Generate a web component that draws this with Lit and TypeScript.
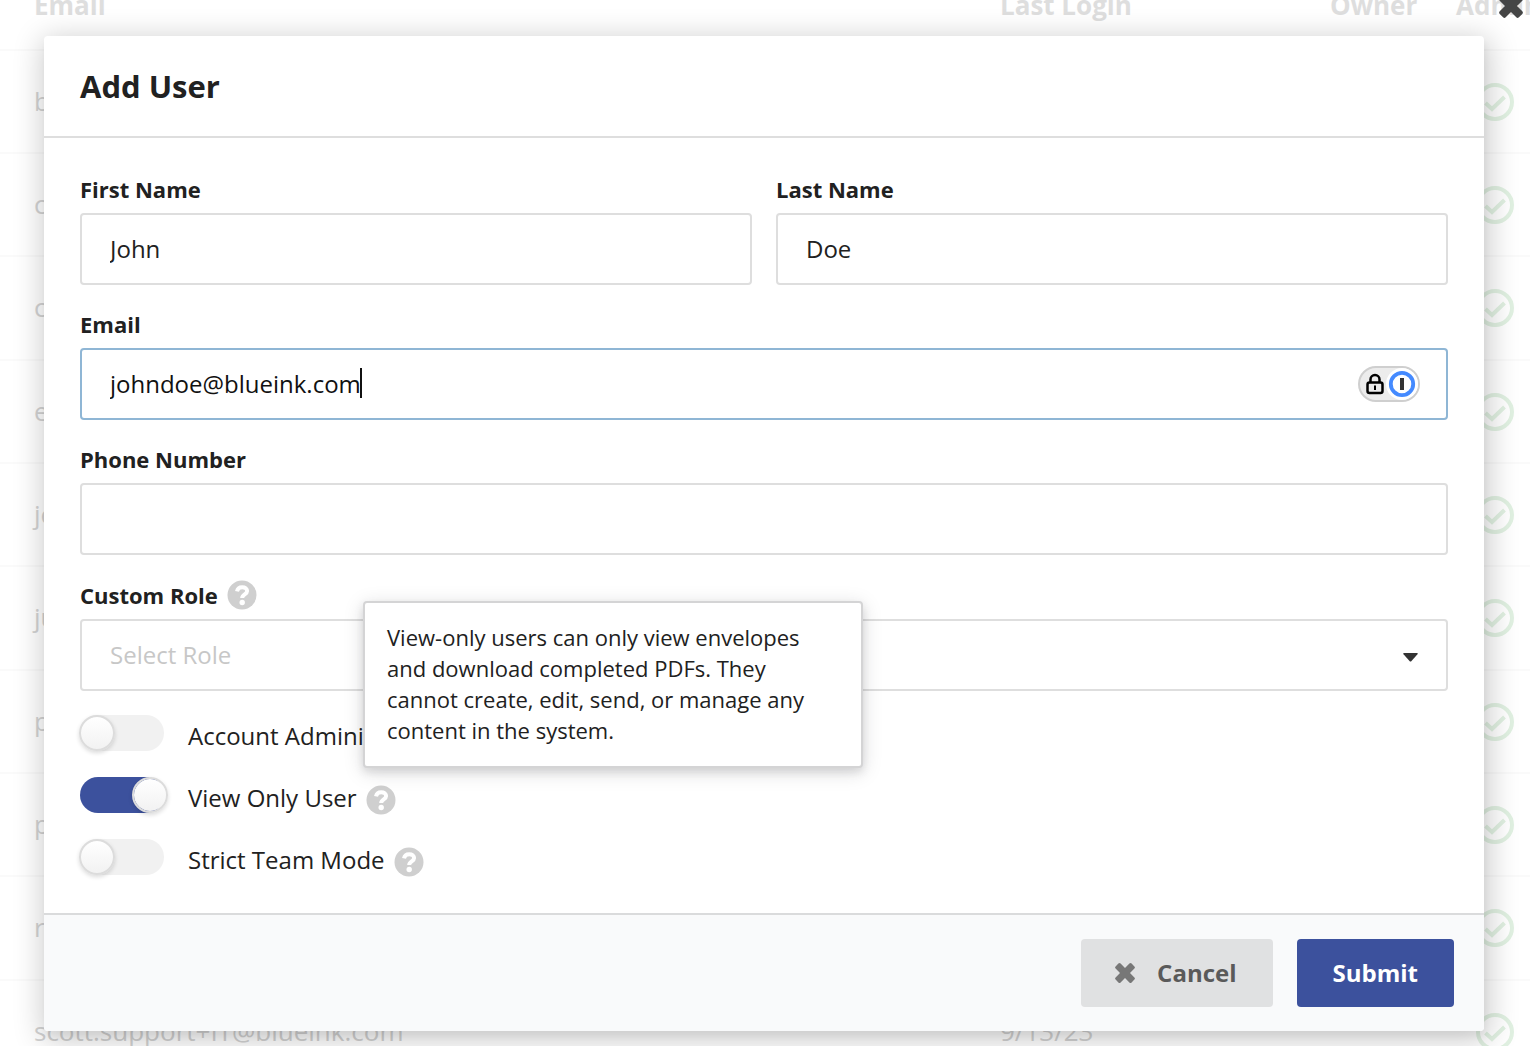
import { LitElement, html, css, svg } from "lit";
import { customElement, state } from "lit/decorators.js";

interface AccountUser {
  email: string;
  lastLogin: string;
}

interface Permission {
  id: string;
  label: string;
  on: boolean;
  help: boolean;
}

const users: AccountUser[] = [
  { email: "billing@blueink.com", lastLogin: "9/20/23" },
  { email: "contact@blueink.com", lastLogin: "9/19/23" },
  { email: "chris@blueink.com", lastLogin: "9/18/23" },
  { email: "emma@blueink.com", lastLogin: "9/18/23" },
  { email: "jeff@blueink.com", lastLogin: "9/16/23" },
  { email: "julia@blueink.com", lastLogin: "9/15/23" },
  { email: "pat@blueink.com", lastLogin: "9/15/23" },
  { email: "peter@blueink.com", lastLogin: "9/14/23" },
  { email: "robin@blueink.com", lastLogin: "9/13/23" },
  { email: "scott.support+IT@blueink.com", lastLogin: "9/13/23" },
];

const crossPath = svg`<path d="M2.6 5.4 5.4 2.6a1.6 1.6 0 0 1 2.2 0L12 7l4.4-4.4a1.6 1.6 0 0 1 2.2 0l2.8 2.8a1.6 1.6 0 0 1 0 2.2L17 12l4.4 4.4a1.6 1.6 0 0 1 0 2.2l-2.8 2.8a1.6 1.6 0 0 1-2.2 0L12 17l-4.4 4.4a1.6 1.6 0 0 1-2.2 0l-2.8-2.8a1.6 1.6 0 0 1 0-2.2L7 12 2.6 7.6a1.6 1.6 0 0 1 0-2.2z" fill="currentColor"/>`;

const crossIcon = html`<svg class="cross" viewBox="2 2 20 20" aria-hidden="true">${crossPath}</svg>`;

const checkIcon = html`<svg class="check" viewBox="0 0 38 38" aria-hidden="true">
  <circle cx="19" cy="19" r="17" fill="none" stroke="currentColor" stroke-width="4"/>
  <path d="M9.500 20 16 26 28.500 14" fill="none" stroke="currentColor" stroke-width="4"/>
</svg>`;

const helpIcon = html`<svg class="help" viewBox="0 0 30 30" role="img" aria-label="Help">
  <circle cx="15" cy="15" r="14.500" fill="#cfcfcf"/>
  <path d="M10 11.300C10.600 8.300 12.500 7.200 15.200 7.200c3 0 4.900 1.500 4.900 3.800 0 3.500-4.900 3.200-4.900 7" fill="none" stroke="#fff" stroke-width="4"/>
  <circle cx="15.200" cy="22.500" r="2.700" fill="#fff"/>
</svg>`;

@customElement("app-root")
export class AppRoot extends LitElement {
  @state() private permissions: Permission[] = [
    { id: "admin", label: "Account Administrator", on: false, help: false },
    { id: "view-only", label: "View Only User", on: true, help: true },
    { id: "strict", label: "Strict Team Mode", on: false, help: true },
  ];

  static styles = css`
    :host {
      display: block;
      position: relative;
      min-height: 100vh;
      overflow: hidden;
      background: #fff;
      color: #212121;
      font: 24px/34px "Open Sans", "Noto Sans", sans-serif;
    }
    *, *::before { box-sizing: border-box; }
    svg { display: block; flex: none; }
    .backdrop {
      position: absolute;
      inset: 0;
      overflow: hidden;
    }
    .users {
      width: calc(100% + 60px);
      margin-top: -39px;
      border-collapse: collapse;
      table-layout: fixed;
      color: #d3d3d3;
      font-size: 26px;
    }
    .users th, .users td {
      padding: 0 0 0 34px;
      text-align: left;
      white-space: nowrap;
      border-bottom: 2px solid #fafafa;
    }
    .users td { height: 103px; padding-bottom: 2px; }
    .users tr:nth-child(3n) td { height: 104px; }
    .users th {
      height: 89px;
      color: #dedede;
      font-weight: 700;
    }
    .users .login { width: 330px; }
    .users .owner { width: 126px; }
    .users .admin { width: 168px; }
    .users td.admin { padding: 0 0 0 54px; }
    .check { width: 38px; height: 38px; color: #e1f1e2; }
    .stage {
      position: relative;
      padding: 36px 46px 15px 44px;
    }
    .dismiss {
      position: absolute;
      top: -6px;
      right: 7px;
      padding: 0;
      border: 0;
      background: none;
      color: #454545;
    }
    .dismiss .cross { width: 24px; height: 24px; }
    .dialog {
      border-radius: 4px;
      background: #fff;
      box-shadow: 2px 6px 6px 0 rgba(0, 0, 0, 0.04), 2px 6px 30px 4px rgba(0, 0, 0, 0.2);
    }
    .head {
      padding: 28px 36px;
      border-bottom: 2px solid #dedede;
    }
    h1 {
      margin: 0;
      font-size: 31px;
      line-height: 44px;
      font-weight: 700;
    }
    .form {
      display: flex;
      flex-direction: column;
      gap: 24px;
      padding: 36px 36px 38px;
    }
    .pair {
      display: grid;
      grid-template-columns: 1fr 1fr;
      gap: 24px;
    }
    .field {
      display: flex;
      flex-direction: column;
      gap: 9px;
    }
    .label {
      display: flex;
      align-items: center;
      gap: 9px;
      font-size: 22px;
      line-height: 30px;
      font-weight: 700;
    }
    .help { width: 30px; height: 30px; }
    .label .help { margin-top: 1px; }
    .box { position: relative; }
    .input {
      display: block;
      width: 100%;
      height: 72px;
      padding: 0 28px 2px;
      border: 2px solid #dedede;
      border-radius: 4px;
      outline: 0;
      background: #fff;
      color: #212121;
      font: inherit;
      appearance: none;
    }
    .active { border-color: #8fb6d5; color: #111; }
    .select { padding-bottom: 0; color: #c7c7c7; }
    .caret {
      position: absolute;
      left: 280px;
      top: 20px;
      width: 2px;
      height: 30px;
      background: #111;
    }
    .vault {
      position: absolute;
      top: 18px;
      right: 28px;
      width: 62px;
      height: 36px;
      padding: 0;
      border: 0;
      background: none;
    }
    .arrow {
      position: absolute;
      right: 30px;
      top: 34px;
      width: 15px;
      height: 9px;
      pointer-events: none;
    }
    .switches {
      display: flex;
      flex-direction: column;
      gap: 26px;
    }
    .switch {
      display: flex;
      align-items: center;
      gap: 9px;
    }
    .toggle {
      display: flex;
      align-items: center;
      gap: 24px;
      height: 36px;
    }
    .track {
      appearance: none;
      display: flex;
      width: 84px;
      height: 36px;
      margin: 0;
      border-radius: 18px;
      background: #f1f1f1;
    }
    .track::before {
      content: "";
      flex: none;
      width: 36px;
      height: 36px;
      margin-left: -1px;
      border: 2px solid #dcdcdc;
      border-radius: 50%;
      background: linear-gradient(#fff, #f2f2f2) padding-box;
      box-shadow: 0 2px 4px rgba(0, 0, 0, 0.14);
    }
    .track:checked { background: #3c519d; }
    .track:checked::before { margin-left: 52px; }
    .caption { padding-top: 6px; }
    .switch .help { margin: 8px 0 -2px; }
    .tip {
      position: absolute;
      left: 363px;
      top: 601px;
      width: 500px;
      padding: 19px 22px 20px;
      border: 2px solid #d4d4d5;
      border-radius: 4px;
      background: #fff;
      font-size: 22px;
      line-height: 31px;
      box-shadow: 0 4px 8px rgba(34, 36, 38, 0.12), 0 4px 20px rgba(34, 36, 38, 0.15);
    }
    .foot {
      display: flex;
      justify-content: flex-end;
      gap: 24px;
      padding: 24px 30px;
      border-top: 2px solid #dadbdc;
      border-radius: 0 0 4px 4px;
      background: #f9fafb;
    }
    .button {
      display: flex;
      align-items: center;
      height: 68px;
      padding: 0 36px;
      border: 0;
      border-radius: 4px;
      background: #e0e1e2;
      color: #5a5a5a;
      font: inherit;
      font-weight: 700;
    }
    .cancel { gap: 22px; padding-left: 34px; }
    .cancel .cross { width: 20px; height: 20px; color: #777; }
    .submit { background: #3c519d; color: #fff; }
  `;

  private flip(id: string) {
    this.permissions = this.permissions.map((p) => (p.id === id ? { ...p, on: !p.on } : p));
  }

  render() {
    return html`
      <div class="backdrop">
        <table class="users">
          <thead>
            <tr><th>Email</th><th class="login">Last Login</th><th class="owner">Owner</th><th class="admin">Admin</th></tr>
          </thead>
          <tbody>
            ${users.map((u) => html`<tr><td>${u.email}</td><td>${u.lastLogin}</td><td></td><td class="admin">${checkIcon}</td></tr>`)}
          </tbody>
        </table>
      </div>
      <div class="stage">
        <form class="dialog" @submit=${(e: Event) => e.preventDefault()}>
          <header class="head"><h1>Add User</h1></header>
          <div class="form">
            <div class="pair">
              <div class="field">
                <label class="label" for="first">First Name</label>
                <input class="input" id="first" value="John" />
              </div>
              <div class="field">
                <label class="label" for="last">Last Name</label>
                <input class="input" id="last" value="Doe" />
              </div>
            </div>
            <div class="field">
              <label class="label" for="email">Email</label>
              <div class="box">
                <input class="input active" id="email" type="email" value="johndoe@blueink.com" />
                <span class="caret"></span>
                <button class="vault" type="button" aria-label="Password manager">
                  <svg viewBox="0 0 62 36" width="62" height="36">
                    <rect x="1" y="1" width="60" height="34" rx="17" fill="#ececec" stroke="#cfcfcf" stroke-width="2"/>
                    <circle cx="44" cy="18" r="16" fill="#fff"/>
                    <rect x="9.500" y="16.500" width="15" height="10.500" rx="2" fill="none" stroke="#000" stroke-width="2.500"/>
                    <path d="M12.500 16v-2.500a4.500 4.500 0 0 1 9 0V16" fill="none" stroke="#000" stroke-width="2.500"/>
                    <path d="M17 19.500v4.500" stroke="#000" stroke-width="2"/>
                    <circle cx="44" cy="18" r="11.200" fill="#fff" stroke="#448aff" stroke-width="3.800"/>
                    <rect x="42" y="12" width="4" height="12" fill="#333"/>
                  </svg>
                </button>
              </div>
            </div>
            <div class="field">
              <label class="label" for="phone">Phone Number</label>
              <input class="input" id="phone" type="tel" />
            </div>
            <div class="field">
              <label class="label" for="role">Custom Role ${helpIcon}</label>
              <div class="box">
                <select class="input select" id="role"><option>Select Role</option></select>
                <svg class="arrow" viewBox="0 0 15 9" aria-hidden="true"><path d="M1 0h13q1.500 0 .5 1.200L8.500 8q-1 1-2 0L.5 1.200Q-.5 0 1 0z" fill="#333"/></svg>
              </div>
            </div>
            <div class="switches">
              ${this.permissions.map(
                (p) => html`<div class="switch">
                  <label class="toggle">
                    <input class="track" type="checkbox" role="switch" .checked=${p.on} @change=${() => this.flip(p.id)} />
                    <span class="caption">${p.label}</span>
                  </label>
                  ${p.help ? helpIcon : ""}
                </div>`
              )}
            </div>
          </div>
          <footer class="foot">
            <button class="button cancel" type="button">${crossIcon}Cancel</button>
            <button class="button submit" type="submit">Submit</button>
          </footer>
        </form>
        <div class="tip" role="tooltip">View-only users can only view envelopes and download completed PDFs. They cannot create, edit, send, or manage any content in the system.</div>
        <button class="dismiss" type="button" aria-label="Close">${crossIcon}</button>
      </div>
    `;
  }
}
